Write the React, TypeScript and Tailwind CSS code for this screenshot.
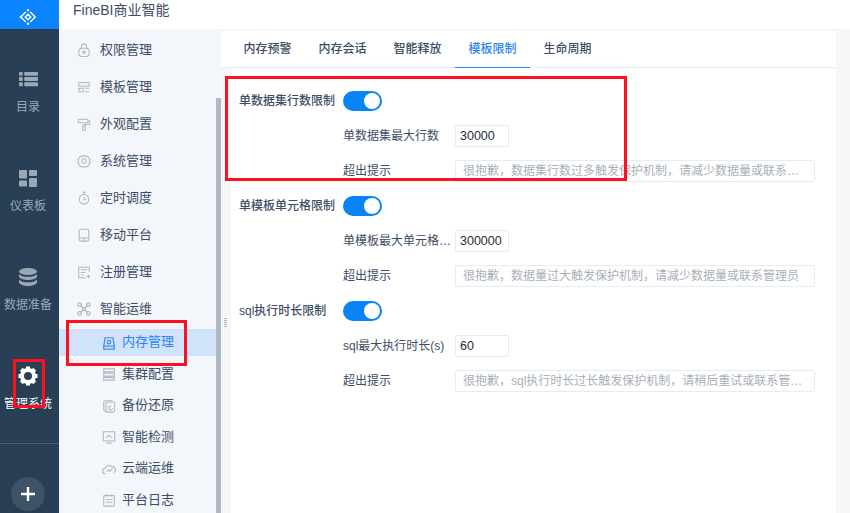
import type { ReactNode } from 'react';

const stroke = { fill: 'none', stroke: 'currentColor', strokeWidth: 1.2 };

const menuIcons: Record<string, ReactNode> = {
  lock: <g {...stroke}><rect x="2" y="6" width="12" height="9.500" rx="4" /><path d="M5 6.500V4a3 3 0 0 1 6 0v2.500" /><circle cx="8" cy="10.500" r="1.300" fill="currentColor" /></g>,
  template: <g {...stroke}><rect x="2" y="3" width="12" height="4" /><path d="M2 9.500h5v4H2zM9 9.500h5M9 13.500h5" /></g>,
  roller: <g {...stroke}><rect x="1.500" y="2.500" width="11" height="4" rx="1" /><path d="M12.500 4.500H14.500V8.500H8V10.500" /><rect x="6.500" y="10.500" width="3" height="4.500" /></g>,
  gear: <g {...stroke}><path d="M8 1.500l2 1.300 2.400-.2 1 2.200 1.600 1.700-1 2.500 1 1.500-1.600 1.700-1 2.200-2.400-.2-2 1.300-2-1.300-2.400.2-1-2.200L1 10.500l1-1.500L1 6.500l1.600-1.700 1-2.200 2.400.2z" /><circle cx="8" cy="8" r="2.500" /></g>,
  timer: <g {...stroke}><circle cx="8" cy="9.500" r="5.500" /><path d="M6 1.500h4M8 1.500V4M8 7v3h2.500" /></g>,
  mobile: <g {...stroke}><rect x="2.500" y="1.500" width="11" height="13.500" rx="2" /><path d="M2.500 11.500h11M8 11.500V15" /></g>,
  register: <g {...stroke}><path d="M14 8V2.500H2v12h8" /><path d="M4.500 5.500h7M4.500 8.500h5M4.500 11.500h3M11 13h4M13 11v4" /></g>,
  ops: <g {...stroke} strokeWidth="1.400"><circle cx="3" cy="3" r="2" /><circle cx="13" cy="3" r="2" /><circle cx="3" cy="13" r="2" /><circle cx="13" cy="13" r="2" /><circle cx="8" cy="8" r="1.500" /><path d="M4.300 4.300l2.600 2.600M11.700 4.300L9.100 6.900M4.300 11.700l2.600-2.600M11.700 11.700L9.100 9.100" /></g>,
  memory: <g {...stroke} strokeWidth="1.400"><path d="M3.500 2h9l1.500 9.500v3.500H2v-3.500z" /><path d="M2 11.500h12" /><circle cx="8" cy="7" r="2" /></g>,
  cluster: <g {...stroke} strokeWidth="1.400"><rect x="2" y="2" width="12" height="3.500" /><rect x="2" y="7" width="12" height="3.500" /><rect x="2" y="12" width="12" height="3" /></g>,
  backup: <g {...stroke}><path d="M12 2H4a2 2 0 0 0-2 2v8a2 2 0 0 0 2 2h2" /><rect x="4.500" y="3.500" width="10" height="11.500" rx="2" /><path d="M12 10.500a2.300 2.300 0 1 1-1-2" /></g>,
  monitor: <g {...stroke}><rect x="1.500" y="2" width="13" height="10.500" /><path d="M5 15h6M4.500 9l3.500-3 3.500 3" /></g>,
  cloud: <g {...stroke}><path d="M4 13.500a3 3 0 0 1-.5-6A4.500 4.500 0 0 1 11 5.500a3.500 3.500 0 0 1 2.500 6.500" /><path d="M5.500 11l2-2 1.500 1.500 3-3" /></g>,
  log: <g {...stroke}><rect x="2" y="3" width="12" height="12" rx="1" /><path d="M5 1.500V4M11 1.500V4M4.500 7.500h7M4.500 10.500h7" /></g>,
};

const MenuIcon = ({ name, active }: { name: string; active?: boolean }) => (
  <svg width="14" height="14" viewBox="0 0 16 16" className={active ? 'text-[#3b8df5] shrink-0' : 'text-[#b1b8c0] shrink-0'}>
    {menuIcons[name]}
  </svg>
);

const topMenu = [
  { label: '权限管理', icon: 'lock' },
  { label: '模板管理', icon: 'template' },
  { label: '外观配置', icon: 'roller' },
  { label: '系统管理', icon: 'gear' },
  { label: '定时调度', icon: 'timer' },
  { label: '移动平台', icon: 'mobile' },
  { label: '注册管理', icon: 'register' },
  { label: '智能运维', icon: 'ops' },
];

const subMenu = [
  { label: '内存管理', icon: 'memory', active: true },
  { label: '集群配置', icon: 'cluster' },
  { label: '备份还原', icon: 'backup' },
  { label: '智能检测', icon: 'monitor' },
  { label: '云端运维', icon: 'cloud' },
  { label: '平台日志', icon: 'log' },
];

const tabs = ['内存预警', '内存会话', '智能释放', '模板限制', '生命周期'];

const groups = [
  {
    title: '单数据集行数限制',
    limitLabel: '单数据集最大行数',
    limit: '30000',
    hint: '很抱歉，数据集行数过多触发保护机制，请减少数据量或联系…',
  },
  {
    title: '单模板单元格限制',
    limitLabel: '单模板最大单元格…',
    limit: '300000',
    hint: '很抱歉，数据量过大触发保护机制，请减少数据量或联系管理员',
  },
  {
    title: 'sql执行时长限制',
    limitLabel: 'sql最大执行时长(s)',
    limit: '60',
    hint: '很抱歉，sql执行时长过长触发保护机制，请稍后重试或联系管…',
  },
];

const RailItem = ({ label, icon, active }: { label: string; icon: ReactNode; active?: boolean }) => (
  <div className={active ? 'h-[99px] pr-[3px] flex flex-col items-center text-white' : 'h-[99px] pr-[3px] flex flex-col items-center text-[#9ba8b5]'}>
    <div className="h-[20px] flex items-center">{icon}</div>
    <div className="mt-[10px] text-[12px] leading-[17px] whitespace-nowrap">{label}</div>
  </div>
);

const Switch = () => (
  <div className="w-[39px] h-[20px] rounded-full bg-[#0a84f5] flex items-center justify-end pr-[2px]">
    <div className="w-[16px] h-[16px] rounded-full bg-white" />
  </div>
);

export default function App() {
  return (
    <div className="relative w-[850px] h-[513px] flex overflow-hidden bg-white text-[12px] text-[#3d4d66] font-['Liberation_Sans','Noto_Sans_CJK_SC',sans-serif]">
      {/* left rail */}
      <div className="w-[59px] shrink-0 bg-[#283f55] flex flex-col">
        <div className="h-[29px] shrink-0 bg-[#0a84ff] pr-[3px] flex items-center justify-center">
          <svg width="18" height="18" viewBox="0 0 20 20" fill="none" stroke="white" strokeWidth="1.600" className="mt-[4px]">
            <path d="M7.500 4.500L2 10l5.500 5.500M12.500 4.500L18 10l-5.500 5.500M10 7l3 3-3 3-3-3z" />
            <circle cx="10" cy="2.500" r="1.300" fill="white" stroke="none" />
            <circle cx="10" cy="17.500" r="1.300" fill="white" stroke="none" />
            <circle cx="2" cy="10" r="1.300" fill="white" stroke="none" />
          </svg>
        </div>
        <div className="pt-[40px] flex-1 min-h-0 overflow-hidden">
          <RailItem
            label="目录"
            icon={
              <svg width="19" height="16" viewBox="0 0 20 16" fill="currentColor">
                <rect x="0" y="0.500" width="4" height="4" rx="1" /><rect x="5.500" y="0.500" width="14.500" height="4" rx="1" />
                <rect x="0" y="6" width="4" height="4" rx="1" /><rect x="5.500" y="6" width="14.500" height="4" rx="1" />
                <rect x="0" y="11.500" width="4" height="4" rx="1" /><rect x="5.500" y="11.500" width="14.500" height="4" rx="1" />
              </svg>
            }
          />
          <RailItem
            label="仪表板"
            icon={
              <svg width="18" height="17" viewBox="0 0 18 17" fill="currentColor">
                <rect x="0" y="0" width="8" height="8.500" rx="1" /><rect x="10" y="0" width="8" height="6" rx="1" />
                <rect x="0" y="10.500" width="8" height="6" rx="1" /><rect x="10" y="8" width="8" height="9" rx="1" />
              </svg>
            }
          />
          <RailItem
            label="数据准备"
            icon={
              <svg width="18" height="18" viewBox="0 0 18 18" fill="currentColor">
                <ellipse cx="9" cy="3.500" rx="9" ry="3.500" />
                <path d="M0 6c1.500 2 5 2.800 9 2.800S16.500 8 18 6v3c-1 2-5 3-9 3s-8-1-9-3zM0 11.500c1.500 2 5 2.800 9 2.800s7.500-.8 9-2.800V14.500c-1 2-5 3.500-9 3.500s-8-1.500-9-3.500z" />
              </svg>
            }
          />
          <RailItem
            label="管理系统"
            active
            icon={
              <svg width="20" height="20" viewBox="0 0 20 20" fill="currentColor">
                <circle cx="10" cy="10" r="6" fill="none" stroke="currentColor" strokeWidth="4" />
                {[0, 45, 90, 135].map(angle => (
                  <g key={angle} transform={`rotate(${angle} 10 10)`}>
                    <rect x="8" y="0.500" width="4" height="3" />
                    <rect x="8" y="16.500" width="4" height="3" />
                  </g>
                ))}
              </svg>
            }
          />
        </div>
        <div className="h-[70px] shrink-0 border-t border-[#4a5d70] pr-[3px] flex items-center justify-center">
          <div className="w-[34px] h-[34px] mt-[30px] rounded-full bg-[#3e5366] flex items-center justify-center">
            <svg width="14" height="14" viewBox="0 0 14 14" stroke="white" strokeWidth="2.400">
              <path d="M7 0v14M0 7h14" />
            </svg>
          </div>
        </div>
      </div>

      <div className="flex-1 flex flex-col min-w-0">
        {/* top bar */}
        <div className="h-[29px] shrink-0 pl-[14px] pb-[9px] flex items-center text-[14px] text-[#3d4d66] bg-white">FineBI商业智能</div>

        <div className="flex-1 flex min-h-0 bg-[#f5f7f9]">
          {/* side menu */}
          <div className="relative w-[162px] shrink-0 bg-[#f3f6fa] pt-[2px]">
            {topMenu.map(item => (
              <div key={item.label} className="h-[37px] pl-[18px] flex items-center gap-[9px] text-[13px]">
                <MenuIcon name={item.icon} />
                <span>{item.label}</span>
              </div>
            ))}
            {subMenu.map(item => (
              <div key={item.label} className="h-[31.5px] flex items-center">
                <div className={item.active ? 'w-[157px] h-[27px] pl-[43px] flex items-center gap-[6px] text-[13px] text-[#2a84f2] bg-[#d0e3fa]' : 'w-[157px] h-[27px] pl-[43px] flex items-center gap-[6px] text-[13px]'}>
                  <MenuIcon name={item.icon} active={item.active} />
                  <span className="pb-[2px]">{item.label}</span>
                </div>
              </div>
            ))}
            <div className="absolute right-0 top-[69px] bottom-0 w-[5px] bg-[#adb9c5]" />
          </div>

          {/* main panel */}
          <div className="flex-1 min-w-0 flex flex-col pt-[2px]">
            <div className="h-[37px] shrink-0 mr-[14px] pl-[9px] bg-white border-b border-[#e8ebf0] flex">
              {tabs.map(tab => (
                <div
                  key={tab}
                  className={tab === '模板限制' ? 'w-[75px] h-[37px] flex items-center justify-center font-medium text-[#2a84f2] border-b border-[#2a84f2]' : 'w-[75px] h-[36px] flex items-center justify-center font-medium text-[#3d4d66]'}
                >
                  {tab}
                </div>
              ))}
            </div>
            <div className="flex-1 flex pl-[10px] pr-[14px]">
              <div className="flex-1 bg-white pt-[15px] pl-[8px]">
                {groups.map(group => (
                  <div key={group.title}>
                    <div className="h-[35px] flex items-center">
                      <div className="w-[104px] font-medium whitespace-nowrap">{group.title}</div>
                      <Switch />
                    </div>
                    <div className="h-[35px] flex items-center pl-[104px]">
                      <div className="w-[112px] whitespace-nowrap">{group.limitLabel}</div>
                      <div className="w-[54px] h-[22px] border border-[#e8ebf0] rounded-[2px] pl-[4px] text-[12.5px] leading-[20px] text-[#1f2d3d]">{group.limit}</div>
                    </div>
                    <div className="h-[35px] flex items-center pl-[104px]">
                      <div className="w-[112px]">超出提示</div>
                      <div className="w-[360px] h-[22px] border border-[#e8ebf0] rounded-[2px] px-[7px] leading-[20px] text-[#a7afb9] whitespace-nowrap">{group.hint}</div>
                    </div>
                  </div>
                ))}
              </div>
            </div>
          </div>
        </div>
      </div>

      {/* resize handle */}
      <div className="absolute left-[224px] top-[318px] w-[3px] h-[10px] bg-[repeating-linear-gradient(to_bottom,#a9b3bd_0,#a9b3bd_1px,transparent_1px,transparent_2px)]" />

      {/* red annotations */}
      <div className="absolute left-[225px] top-[76px] w-[402px] h-[105px] border-[3px] border-[#ff1020]" />
      <div className="absolute left-[66px] top-[320px] w-[121px] h-[46px] border-[3px] border-[#ff1020]" />
      <div className="absolute left-[13px] top-[359px] w-[32px] h-[49px] border-[3px] border-[#ff1020]" />
    </div>
  );
}
